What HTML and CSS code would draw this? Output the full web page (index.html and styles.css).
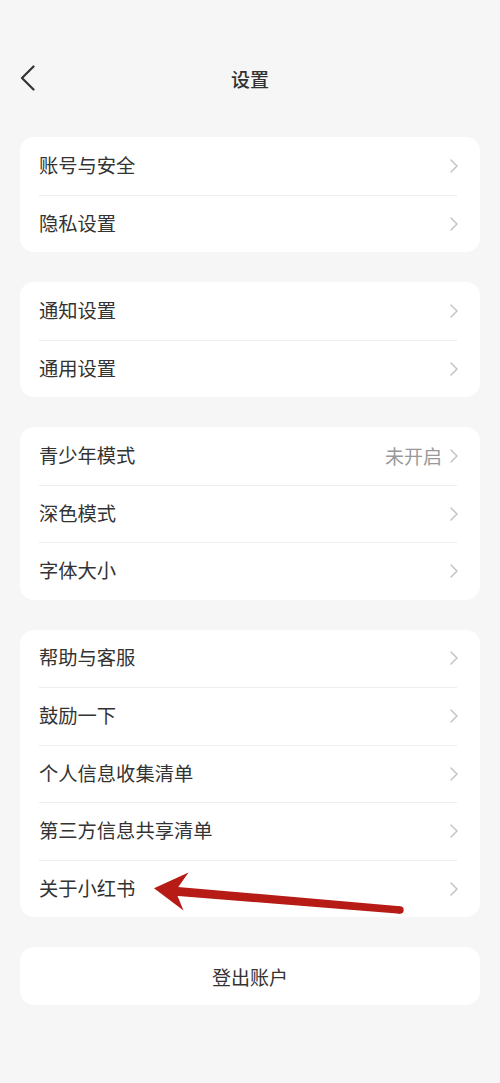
FILE: index.html
```html
<!DOCTYPE html>
<html lang="zh-CN">
<head>
<meta charset="utf-8">
<title>设置</title>
<link rel="stylesheet" href="styles.css">
</head>
<body>
<div class="page">
  <header class="header">
    <div class="back">
      <svg width="16" height="26" viewBox="0 0 16 26"><polyline points="13.5,1.5 2,13 13.5,24.5" fill="none" stroke="#333" stroke-width="2.2" stroke-linecap="round" stroke-linejoin="round"/></svg>
    </div>
    <div class="title">设置</div>
    <div></div>
  </header>
  <main class="list">
    <section class="card">
      <div class="row"><span class="label">账号与安全</span><span class="chev"><svg width="10" height="16" viewBox="0 0 10 16"><polyline points="2,2 8,8 2,14" fill="none" stroke="#c6c6c6" stroke-width="1.6" stroke-linecap="round" stroke-linejoin="round"/></svg></span></div>
      <div class="row"><span class="label">隐私设置</span><span class="chev"><svg width="10" height="16" viewBox="0 0 10 16"><polyline points="2,2 8,8 2,14" fill="none" stroke="#c6c6c6" stroke-width="1.6" stroke-linecap="round" stroke-linejoin="round"/></svg></span></div>
    </section>
    <section class="card">
      <div class="row"><span class="label">通知设置</span><span class="chev"><svg width="10" height="16" viewBox="0 0 10 16"><polyline points="2,2 8,8 2,14" fill="none" stroke="#c6c6c6" stroke-width="1.6" stroke-linecap="round" stroke-linejoin="round"/></svg></span></div>
      <div class="row"><span class="label">通用设置</span><span class="chev"><svg width="10" height="16" viewBox="0 0 10 16"><polyline points="2,2 8,8 2,14" fill="none" stroke="#c6c6c6" stroke-width="1.6" stroke-linecap="round" stroke-linejoin="round"/></svg></span></div>
    </section>
    <section class="card">
      <div class="row"><span class="label">青少年模式</span><span class="value">未开启</span><span class="chev"><svg width="10" height="16" viewBox="0 0 10 16"><polyline points="2,2 8,8 2,14" fill="none" stroke="#c6c6c6" stroke-width="1.6" stroke-linecap="round" stroke-linejoin="round"/></svg></span></div>
      <div class="row"><span class="label">深色模式</span><span class="chev"><svg width="10" height="16" viewBox="0 0 10 16"><polyline points="2,2 8,8 2,14" fill="none" stroke="#c6c6c6" stroke-width="1.6" stroke-linecap="round" stroke-linejoin="round"/></svg></span></div>
      <div class="row"><span class="label">字体大小</span><span class="chev"><svg width="10" height="16" viewBox="0 0 10 16"><polyline points="2,2 8,8 2,14" fill="none" stroke="#c6c6c6" stroke-width="1.6" stroke-linecap="round" stroke-linejoin="round"/></svg></span></div>
    </section>
    <section class="card">
      <div class="row"><span class="label">帮助与客服</span><span class="chev"><svg width="10" height="16" viewBox="0 0 10 16"><polyline points="2,2 8,8 2,14" fill="none" stroke="#c6c6c6" stroke-width="1.6" stroke-linecap="round" stroke-linejoin="round"/></svg></span></div>
      <div class="row"><span class="label">鼓励一下</span><span class="chev"><svg width="10" height="16" viewBox="0 0 10 16"><polyline points="2,2 8,8 2,14" fill="none" stroke="#c6c6c6" stroke-width="1.6" stroke-linecap="round" stroke-linejoin="round"/></svg></span></div>
      <div class="row"><span class="label">个人信息收集清单</span><span class="chev"><svg width="10" height="16" viewBox="0 0 10 16"><polyline points="2,2 8,8 2,14" fill="none" stroke="#c6c6c6" stroke-width="1.6" stroke-linecap="round" stroke-linejoin="round"/></svg></span></div>
      <div class="row"><span class="label">第三方信息共享清单</span><span class="chev"><svg width="10" height="16" viewBox="0 0 10 16"><polyline points="2,2 8,8 2,14" fill="none" stroke="#c6c6c6" stroke-width="1.6" stroke-linecap="round" stroke-linejoin="round"/></svg></span></div>
      <div class="row"><span class="label">关于小红书</span><span class="chev"><svg width="10" height="16" viewBox="0 0 10 16"><polyline points="2,2 8,8 2,14" fill="none" stroke="#c6c6c6" stroke-width="1.6" stroke-linecap="round" stroke-linejoin="round"/></svg></span></div>
    </section>
    <section class="card logout">登出账户</section>
  </main>
  <svg class="annotation" width="500" height="1083" viewBox="0 0 500 1083">
    <polygon points="172,886.5 400,906.3 400,913.7 172,895.5" fill="#b71b15"/>
    <circle cx="400" cy="910" r="3.7" fill="#b71b15"/>
    <polygon points="154,888.3 188.5,872.5 175.5,891 183.5,910.5" fill="#b71b15"/>
  </svg>
</div>
</body>
</html>
```

FILE: styles.css
```css
* { box-sizing: border-box; }
html, body {
  margin: 0;
  padding: 0;
  background: #f6f6f6;
}
body {
  font-family: "Noto Sans CJK SC", "Noto Sans", sans-serif;
  color: #333;
}
.page {
  position: relative;
  width: 500px;
  min-height: 1083px;
  padding-top: 49px;
}
.header {
  height: 58px;
  display: grid;
  grid-template-columns: 1fr auto 1fr;
  align-items: center;
}
.back {
  padding-left: 20px;
  display: flex;
  align-items: center;
  height: 26px;
}
.back svg { display: block; }
.title {
  font-size: 19px;
  font-weight: 500;
  color: #333;
  line-height: 1;
}
.list {
  padding: 30px 20px 0;
  display: flex;
  flex-direction: column;
  gap: 30px;
}
.card {
  background: #fff;
  border-radius: 14px;
}
.row {
  height: 57.5px;
  margin-left: 19px;
  margin-right: 23px;
  display: flex;
  align-items: center;
  border-top: 1px solid #eeeeee;
}
.row:first-child { border-top: none; }
.label {
  flex: 1;
  font-size: 19.3px;
  color: #333;
  line-height: 1;
  padding-bottom: 1px;
}
.value {
  font-size: 19px;
  color: #999;
  margin-right: 7px;
  line-height: 1;
  padding-bottom: 1px;
}
.chev {
  display: flex;
  align-items: center;
  width: 10px;
  margin-right: -2px;
}
.chev svg { display: block; }
.logout {
  height: 58px;
  display: flex;
  align-items: center;
  justify-content: center;
  font-size: 19px;
  color: #333;
}
.annotation {
  position: absolute;
  left: 0;
  top: 0;
  pointer-events: none;
}
```
